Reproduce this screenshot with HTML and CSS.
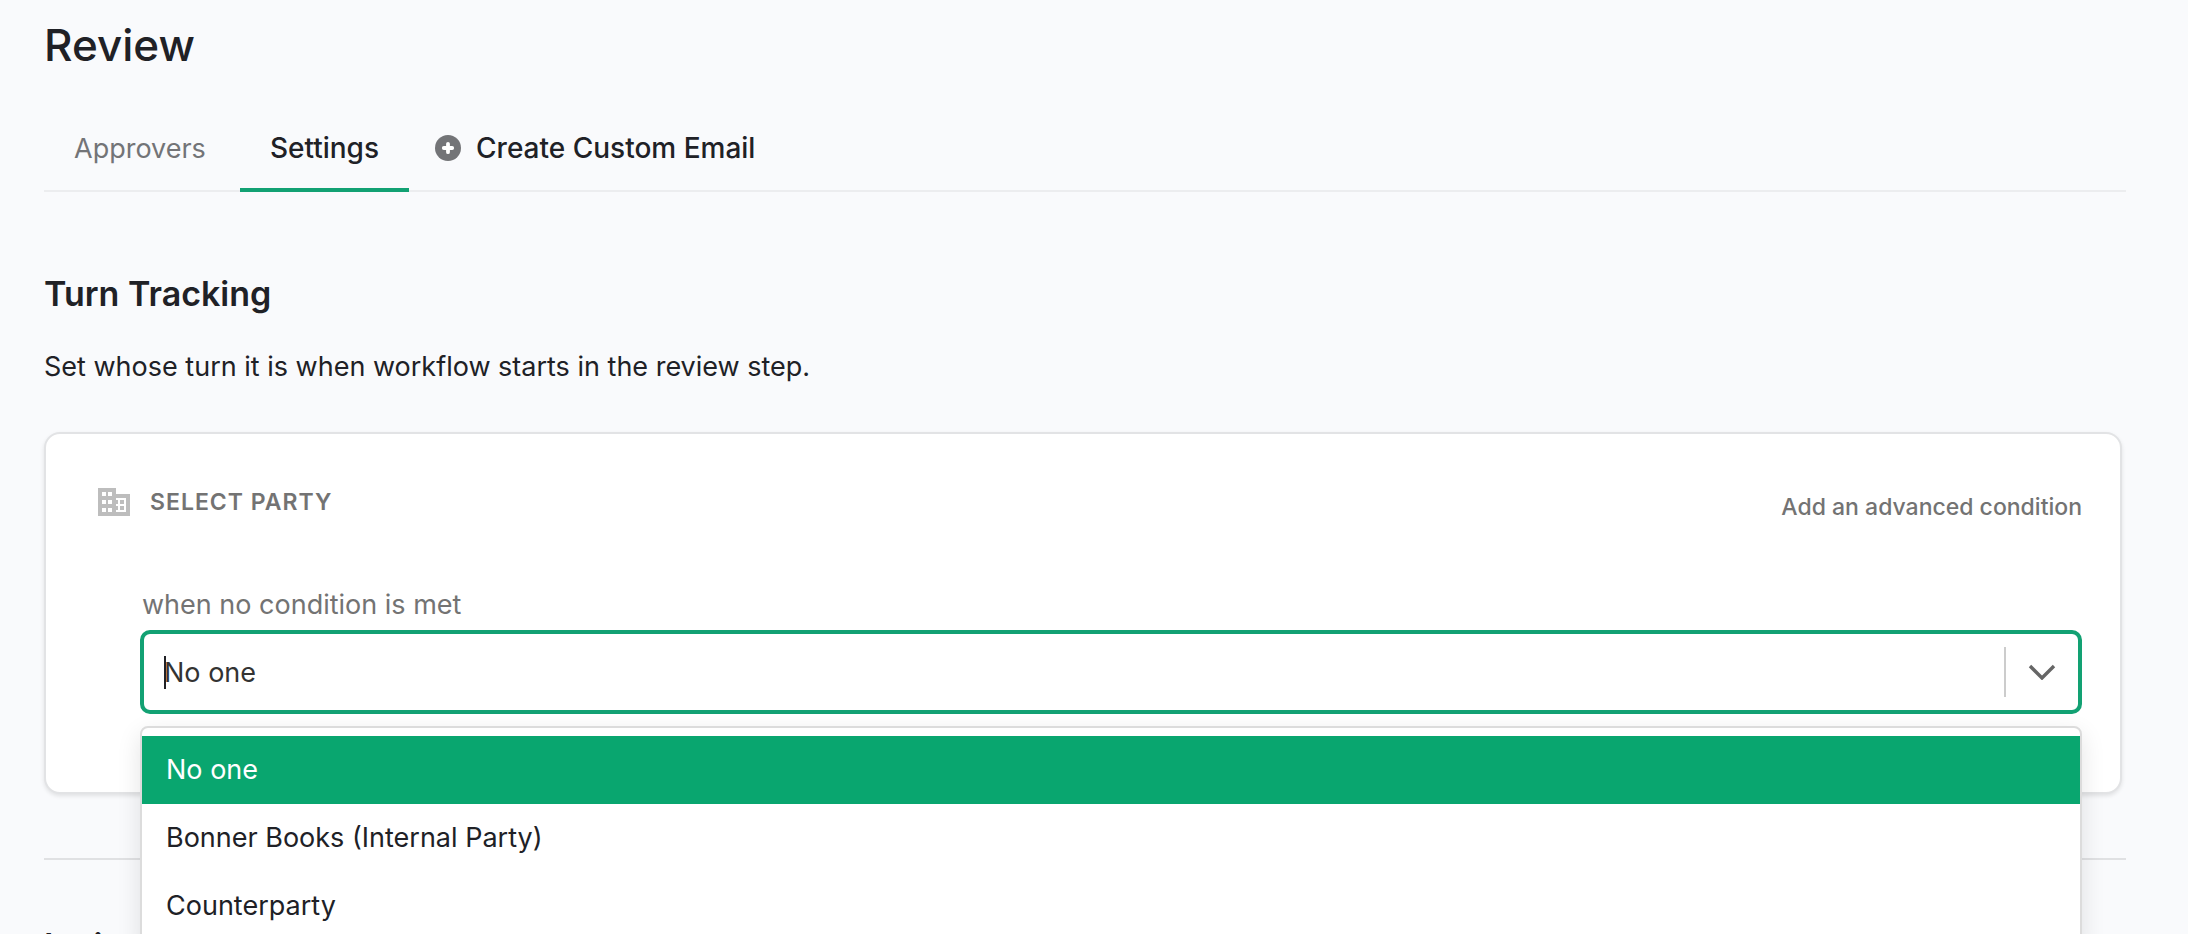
FILE: index.html
```html
<!DOCTYPE html>
<html lang="en">
<head>
<meta charset="utf-8">
<meta name="viewport" content="width=device-width, initial-scale=1">
<title>Review</title>
<link rel="stylesheet" href="styles.css">
</head>
<body>
<main class="page">
  <h1 class="page-title">Review</h1>
  <nav class="tabs" aria-label="Review sections">
    <button class="tab" type="button">Approvers</button>
    <button class="tab tab-active" type="button" aria-current="page">Settings</button>
    <button class="tab tab-create" type="button">
      <svg class="icon-plus" viewBox="0 0 26 26" aria-hidden="true"><circle cx="13" cy="13" r="13" fill="#737477"/><path d="M13 8.8v8.4M8.8 13h8.4" stroke="#fff" stroke-width="3.8" stroke-linecap="round"/></svg>
      <span>Create Custom Email</span>
    </button>
  </nav>

  <section class="section">
    <h2 class="section-title">Turn Tracking</h2>
    <p class="section-text">Set whose turn it is when workflow starts in the review step.</p>
    <div class="card">
      <div class="card-head">
        <h3 class="card-title">
          <svg class="icon-party" viewBox="0 0 32 28" aria-hidden="true"><path fill="#bdbdbd" fill-rule="evenodd" d="M0 0h18v6h14v22H0zM4 4v4h4V4zM10 4v4h4V4zM4 12v4h4v-4zM10 12v4h4v-4zM4 20v4h4v-4zM10 20v4h4v-4zM18 10v2h2v4h-2v2h2v4h-2v2h10V10z"/><path fill="#bdbdbd" d="M22 12h4v4h-4zM22 18h4v4h-4z"/></svg>
          <span>SELECT PARTY</span>
        </h3>
        <button class="link-button" type="button">Add an advanced condition</button>
      </div>
      <div class="field">
        <label class="field-label" for="party">when no condition is met</label>
        <div class="combo">
          <input class="combo-input" id="party" type="text" role="combobox" aria-expanded="true" aria-controls="party-list" value="No one">
          <span class="caret"></span>
          <button class="combo-toggle" type="button" aria-label="Toggle options">
            <svg class="icon-chevron" viewBox="0 0 28 16" aria-hidden="true"><path d="M2 2l12 12L26 2" fill="none" stroke="#666" stroke-width="3.4"/></svg>
          </button>
          <ul class="menu" id="party-list" role="listbox">
            <li class="option option-active" role="option" aria-selected="true">No one</li>
            <li class="option" role="option">Bonner Books (Internal Party)</li>
            <li class="option" role="option">Counterparty</li>
          </ul>
        </div>
      </div>
    </div>
  </section>

  <section class="section section-next">
    <h2 class="section-title">Invi</h2>
  </section>
</main>
</body>
</html>
```
FILE: styles.css
```css
* { box-sizing: border-box; }
html { overflow: hidden; }
body {
  margin: 0;
  height: 100vh;
  overflow: hidden;
  background: #f9fafc;
  color: #202126;
  font-family: Inter, "Liberation Sans", sans-serif;
  font-size: 27px;
}
h1, h2, h3, p, ul { margin: 0; padding: 0; }
button { padding: 0; border: 0; background: none; color: inherit; font: inherit; cursor: pointer; }
.page { padding: 14px 62px 0 44px; }
.page-title { font-size: 44px; font-weight: 500; line-height: 62px; }
.tabs { display: flex; gap: 4px; margin-top: 44px; height: 72px; border-bottom: 2px solid #ecedef; }
.tab { height: 72px; padding: 0 30px 12px; border-bottom: 4px solid transparent; color: #737477; }
.tab-active { border-bottom-color: #12a173; color: #202126; font-size: 28px; font-weight: 500; }
.tab-create { display: flex; align-items: center; gap: 15px; padding: 0 22px 12px; color: #202126; font-size: 28px; font-weight: 500; }
.icon-plus { width: 26px; height: 26px; }
.section { padding-top: 80px; }
.section-title { font-size: 34px; font-weight: 600; line-height: 44px; }
.section-text { margin-top: 32px; line-height: 38px; }
.card {
  margin: 46px 4px 0 0;
  height: 362px;
  padding: 52px 38px 0 52px;
  border: 2px solid #e2e3e5;
  border-radius: 16px;
  background: #fff;
  box-shadow: 0 2px 4px #0000001a;
}
.card-head { display: flex; justify-content: space-between; color: #737373; }
.card-title { display: flex; align-items: center; gap: 20px; height: 32px; font-size: 23px; font-weight: 600; letter-spacing: 1px; }
.icon-party { width: 32px; height: 28px; }
.link-button { height: 42px; font-size: 23px; font-weight: 500; }
.field { padding-left: 42px; margin-top: 56px; }
.field-label { display: block; margin-left: 2px; padding-bottom: 4px; line-height: 42px; color: #737373; }
.combo {
  position: relative;
  display: flex;
  align-items: center;
  height: 84px;
  border: 4px solid #12a173;
  border-radius: 10px;
  background: #fff;
}
.combo-input { flex: 1; min-width: 0; padding: 0 20px; border: 0; outline: 0; background: none; color: #333; font: inherit; }
.caret { position: absolute; left: 20px; top: 22px; width: 2px; height: 33px; background: #202126; }
.combo-toggle { display: flex; align-items: center; justify-content: center; width: 74px; height: 50px; border-left: 2px solid #ccc; }
.icon-chevron { width: 28px; height: 16px; }
.menu {
  position: absolute;
  top: 92px;
  left: -4px;
  right: -4px;
  padding: 8px 0;
  border: 2px solid #dcdcdc;
  border-radius: 8px;
  background: #fff;
  box-shadow: 0 8px 24px #0000001c;
  list-style: none;
}
.option { padding: 0 24px; line-height: 68px; }
.option-active { background: #09a66f; color: #fff; }
.section-next { margin-top: 64px; padding-top: 64px; border-top: 2px solid #e0e1e3; }
```
